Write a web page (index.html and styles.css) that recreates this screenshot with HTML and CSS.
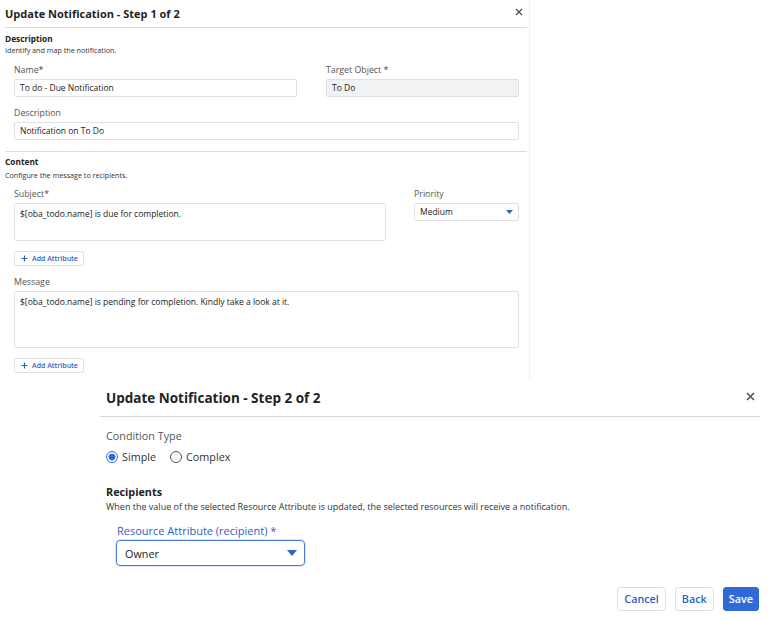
FILE: index.html
```html
<!DOCTYPE html>
<html lang="en">
<head>
    <meta charset="UTF-8">
    <title>Update Notification</title>
    <link rel="stylesheet" href="styles.css">
</head>
<body>

    <!-- step 1 -->
    <div class="step_one">
        <div class="head flex">
            <div class="title">Update Notification - Step 1 of 2</div>
            <svg class="close" width="8" height="8" viewBox="0 0 8 8"><path d="M1 1L7 7M7 1L1 7" stroke="#555" stroke-width="1.4"/></svg>
        </div>

        <div class="section">
            <div class="sec_title">Description</div>
            <div class="sec_desc">Identify and map the notification.</div>
        </div>
        <div class="row flex">
            <div class="field name_field">
                <div class="label">Name<span class="star">*</span></div>
                <div class="input">To do - Due Notification</div>
            </div>
            <div class="field target_field">
                <div class="label">Target Object <span class="star">*</span></div>
                <div class="input disabled">To Do</div>
            </div>
        </div>
        <div class="row">
            <div class="field">
                <div class="label second">Description</div>
                <div class="input">Notification on To Do</div>
            </div>
        </div>

        <div class="divider"></div>

        <div class="section content_sec">
            <div class="sec_title">Content</div>
            <div class="sec_desc">Configure the message to recipients.</div>
        </div>
        <div class="row flex">
            <div class="field subject_field">
                <div class="label subject">Subject<span class="star">*</span></div>
                <div class="input area">$[oba_todo.name] is due for completion.</div>
                <div class="add_btn flex">
                    <svg width="7" height="7" viewBox="0 0 7 7"><path d="M3.5 0.5V6.5M0.5 3.5H6.5" stroke="#2f5fbf" stroke-width="1.2"/></svg>
                    Add Attribute
                </div>
            </div>
            <div class="field priority_field">
                <div class="label subject">Priority</div>
                <div class="input select flex">
                    <span>Medium</span>
                    <svg width="7" height="4" viewBox="0 0 7 4"><path d="M0 0H7L3.5 4Z" fill="#2f64c8"/></svg>
                </div>
            </div>
        </div>
        <div class="row">
            <div class="field">
                <div class="label second">Message</div>
                <div class="input area message">$[oba_todo.name] is pending for completion. Kindly take a look at it.</div>
                <div class="add_btn flex">
                    <svg width="7" height="7" viewBox="0 0 7 7"><path d="M3.5 0.5V6.5M0.5 3.5H6.5" stroke="#2f5fbf" stroke-width="1.2"/></svg>
                    Add Attribute
                </div>
            </div>
        </div>
    </div>

    <!-- step 2 -->
    <div class="step_two">
        <div class="head2 flex">
            <div class="title2">Update Notification - Step 2 of 2</div>
            <svg class="close2" width="9" height="9" viewBox="0 0 9 9"><path d="M1 1L8 8M8 1L1 8" stroke="#555" stroke-width="1.6"/></svg>
        </div>

        <div class="cond_label">Condition Type</div>
        <div class="radios flex">
            <label class="radio flex"><span class="dot checked"></span>Simple</label>
            <label class="radio flex"><span class="dot"></span>Complex</label>
        </div>

        <div class="sec_title2">Recipients</div>
        <div class="sec_desc2">When the value of the selected Resource Attribute is updated, the selected resources will receive a notification.</div>

        <div class="recipient">
            <div class="blue_label">Resource Attribute (recipient) <span>*</span></div>
            <div class="big_select flex">
                <span>Owner</span>
                <svg width="10" height="6" viewBox="0 0 10 6"><path d="M0 0H10L5 6Z" fill="#2f64c8"/></svg>
            </div>
        </div>

        <div class="actions flex">
            <div class="btn">Cancel</div>
            <div class="btn">Back</div>
            <div class="btn primary">Save</div>
        </div>
    </div>

</body>
</html>
```

FILE: styles.css
```css
*{
    box-sizing: border-box;
    font-family: "Open Sans", "Liberation Sans", Arial, sans-serif;
}
body{
    margin: 0;
    background-color: #fff;
    color: #222;
}
.flex{
    display: flex;
}

/* ---------- step 1 ---------- */
.step_one{
    width: 530px;
    height: 380px;
    border-right: 1px solid #f1f1f3;
}
.head{
    margin: 0 2px 0 5px;
    height: 28px;
    border-bottom: 1px solid #dcdde0;
    justify-content: space-between;
    align-items: center;
}
.title{
    font-size: 11px;
    font-weight: 700;
    color: #1f1f1f;
}
.close{
    margin-right: 4px;
    margin-bottom: 4px;
}
.section{
    padding: 5px 0 0 5px;
}
.content_sec{
    padding-top: 4px;
}
.sec_title{
    font-size: 8.3px;
    font-weight: 700;
    line-height: 12px;
}
.sec_desc{
    font-size: 7.2px;
    color: #333;
    line-height: 10px;
}
.content_sec .sec_desc{
    margin-top: 2px;
}
.row{
    padding: 0 10px 0 14px;
}
.field{
    flex: none;
}
.label{
    font-size: 8.8px;
    color: #555;
    line-height: 12px;
    margin: 9px 0 3px 0;
}
.label.second{
    margin-top: 10px;
}
.label.subject{
    margin-top: 8px;
}
.star{
    color: #444;
}
.input{
    height: 18px;
    border: 1px solid #dfe0e3;
    border-radius: 2px;
    font-size: 8.5px;
    line-height: 16px;
    padding: 0 5px;
    color: #222;
    background-color: #fff;
}
.input.disabled{
    background-color: #f1f2f4;
}
.name_field{
    width: 283px;
}
.target_field{
    width: 193px;
    margin-left: 29px;
}
.divider{
    margin: 11px 2px 0 5px;
    border-top: 1px solid #dcdde0;
}
.input.area{
    height: 38px;
    padding-top: 2px;
}
.input.area.message{
    height: 57px;
}
.subject_field{
    width: 372px;
}
.priority_field{
    width: 105px;
    margin-left: 28px;
}
.select{
    justify-content: space-between;
    align-items: center;
}
.add_btn{
    width: 70px;
    height: 15px;
    margin-top: 10px;
    border: 1px solid #dfe0e3;
    border-radius: 2px;
    font-size: 7px;
    font-weight: 600;
    color: #2f5fbf;
    align-items: center;
    padding-left: 6px;
    gap: 4px;
}

/* ---------- step 2 ---------- */
.step_two{
    margin-left: 100px;
    width: 660px;
    padding: 0 0 0 6px;
}
.head2{
    height: 37px;
    border-bottom: 1px solid #d6d8de;
    margin-left: -6px;
    padding-left: 6px;
    justify-content: space-between;
    align-items: center;
}
.title2{
    font-size: 13.5px;
    font-weight: 700;
    color: #222;
}
.close2{
    margin-right: 5px;
    margin-bottom: 4px;
}
.cond_label{
    font-size: 10.8px;
    color: #555;
    margin-top: 11px;
    line-height: 16px;
}
.radios{
    margin-top: 5px;
    gap: 14px;
    height: 16px;
}
.radio{
    align-items: center;
    font-size: 10.8px;
    line-height: 16px;
    color: #333;
    gap: 4px;
}
.dot{
    width: 12px;
    height: 12px;
    border-radius: 50%;
    border: 1.3px solid #555;
}
.dot.checked{
    border-color: #2f6bd8;
    background: radial-gradient(circle, #2f6bd8 0 3.2px, #fff 3.8px);
}
.sec_title2{
    font-size: 10.8px;
    font-weight: 700;
    margin-top: 20px;
    line-height: 14px;
}
.sec_desc2{
    font-size: 9px;
    color: #333;
    line-height: 15px;
}
.recipient{
    padding-left: 10px;
    margin-top: 10px;
}
.blue_label{
    font-size: 11px;
    color: #2f5fbf;
    line-height: 14px;
    padding-left: 1px;
}
.big_select{
    width: 189px;
    height: 26px;
    margin-top: 2px;
    border: 1px solid #4a7bd6;
    border-radius: 4px;
    box-shadow: 0 0 0 1px #dbe6f8;
    align-items: center;
    justify-content: space-between;
    padding: 0 7px 0 8px;
    font-size: 10.8px;
    color: #222;
}
.actions{
    justify-content: flex-end;
    gap: 9px;
    margin-top: 21px;
    padding-right: 1px;
}
.btn{
    height: 24px;
    padding: 0 6px;
    border: 1px solid #dcdfe5;
    border-radius: 3px;
    font-size: 10.8px;
    font-weight: 600;
    color: #2f5fbf;
    line-height: 22px;
}
.btn.primary{
    padding: 0 5px;
    background-color: #2f6bd8;
    border-color: #2f6bd8;
    color: #fff;
}
```
